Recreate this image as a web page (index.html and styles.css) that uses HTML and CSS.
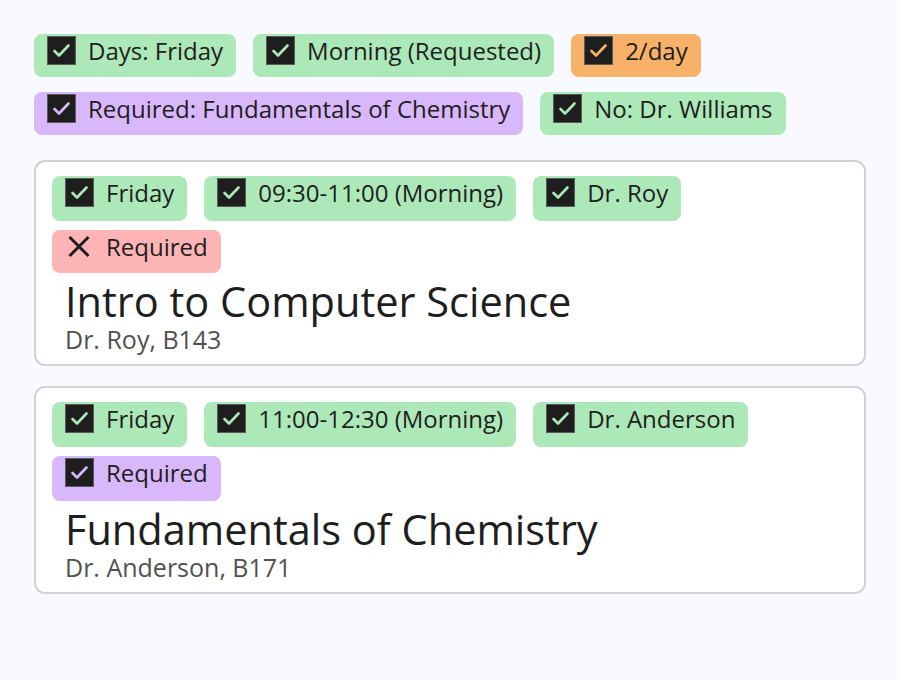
FILE: index.html
```html
<!DOCTYPE html>
<html lang="en">
<head>
<meta charset="utf-8">
<title>Schedule</title>
<link rel="stylesheet" href="styles.css">
</head>
<body>
<svg width="0" height="0" class="defs">
  <defs>
    <symbol id="chk" viewBox="0 0 29 29">
      <rect x="0.5" y="0.5" width="28" height="28" fill="#1e1e1e" stroke="#5a5a5a"/>
      <path d="M7.5 15 L12 19.5 L21.5 9.5" fill="none" stroke="var(--chk)" stroke-width="2.6" stroke-linecap="round" stroke-linejoin="round"/>
    </symbol>
    <symbol id="cross" viewBox="0 0 29 29">
      <path d="M4.5 5 L23.5 24 M23.5 5 L4.5 24" fill="none" stroke="#1e1e1e" stroke-width="3"/>
    </symbol>
  </defs>
</svg>
<main class="page">
  <section class="filters">
    <span class="chip green"><svg class="ico"><use href="#chk"/></svg><span>Days: Friday</span></span>
    <span class="chip green"><svg class="ico"><use href="#chk"/></svg><span>Morning (Requested)</span></span>
    <span class="chip orange"><svg class="ico"><use href="#chk"/></svg><span>2/day</span></span>
    <span class="chip purple"><svg class="ico"><use href="#chk"/></svg><span>Required: Fundamentals of Chemistry</span></span>
    <span class="chip green"><svg class="ico"><use href="#chk"/></svg><span>No: Dr. Williams</span></span>
  </section>

  <article class="card">
    <div class="tags">
      <span class="chip green"><svg class="ico"><use href="#chk"/></svg><span>Friday</span></span>
      <span class="chip green"><svg class="ico"><use href="#chk"/></svg><span>09:30-11:00 (Morning)</span></span>
      <span class="chip green"><svg class="ico"><use href="#chk"/></svg><span>Dr. Roy</span></span>
      <span class="chip red"><svg class="ico"><use href="#cross"/></svg><span>Required</span></span>
    </div>
    <h2 class="title">Intro to Computer Science</h2>
    <p class="sub">Dr. Roy, B143</p>
  </article>

  <article class="card">
    <div class="tags">
      <span class="chip green"><svg class="ico"><use href="#chk"/></svg><span>Friday</span></span>
      <span class="chip green"><svg class="ico"><use href="#chk"/></svg><span>11:00-12:30 (Morning)</span></span>
      <span class="chip green"><svg class="ico"><use href="#chk"/></svg><span>Dr. Anderson</span></span>
      <span class="chip purple"><svg class="ico"><use href="#chk"/></svg><span>Required</span></span>
    </div>
    <h2 class="title">Fundamentals of Chemistry</h2>
    <p class="sub">Dr. Anderson, B171</p>
  </article>
</main>
</body>
</html>
```

FILE: styles.css
```css
html, body {
  margin: 0;
  padding: 0;
  background: #f9faff;
}
body {
  font-family: "Open Sans", "Noto Sans", sans-serif;
  color: #1e1e1e;
}
.defs {
  position: absolute;
  width: 0;
  height: 0;
}
.page {
  padding: 34px 34px 0 34px;
  display: flex;
  flex-direction: column;
}
.filters {
  display: flex;
  flex-wrap: wrap;
  column-gap: 17px;
  row-gap: 15px;
  margin-bottom: 25px;
}
.chip {
  --chk: #abe7b5;
  display: inline-flex;
  align-items: flex-start;
  gap: 12px;
  height: 43px;
  box-sizing: border-box;
  padding: 2px 13px 0 13px;
  border-radius: 8px;
  font-size: 24px;
  line-height: 30px;
  white-space: nowrap;
  background: var(--chk);
}
.chip.green { --chk: #ade8b8; }
.chip.orange { --chk: #f8b169; }
.chip.purple { --chk: #d9b7fb; }
.chip.red { --chk: #fdb4b4; }
.ico {
  width: 29px;
  height: 29px;
  flex: none;
}
.card {
  background: #fff;
  border: 2px solid #d2d2d2;
  border-radius: 11px;
  padding: 14px 16px 10px 16px;
  margin-bottom: 20px;
  width: 796px;
}
.tags {
  display: flex;
  flex-wrap: wrap;
  column-gap: 17px;
  row-gap: 9px;
}
.tags .chip {
  height: 45px;
}
.tags .chip.red {
  height: 43px;
}
.title {
  margin: 4px 0 0 13px;
  font-weight: 400;
  font-size: 41.5px;
  line-height: 48px;
  color: #1e1e1e;
}
.sub {
  margin: -1px 0 0 13px;
  font-size: 25px;
  line-height: 30px;
  color: #505050;
}
```
